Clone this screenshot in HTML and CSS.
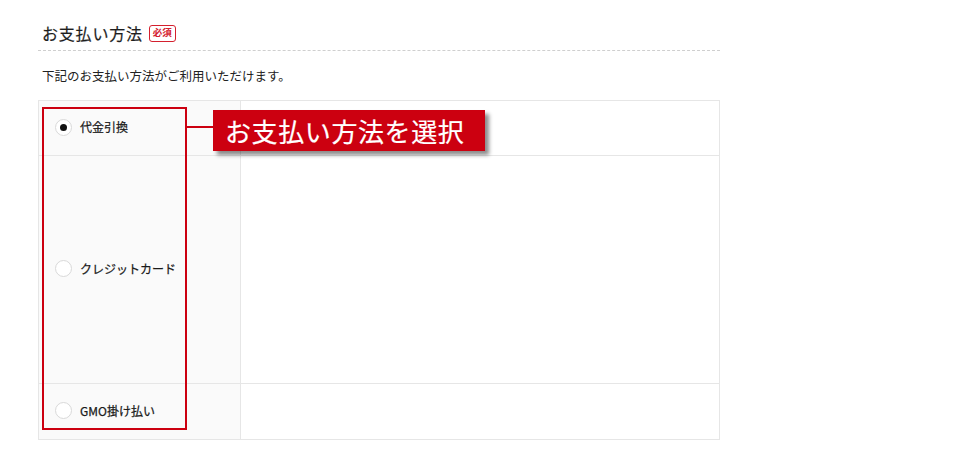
FILE: index.html
```html
<!DOCTYPE html>
<html lang="ja">
<head>
<meta charset="utf-8">
<link rel="stylesheet" href="styles.css">
</head>
<body>
<div class="section">
  <div class="head">
    <h2 class="title">お支払い方法</h2>
    <span class="badge">必須</span>
  </div>
  <p class="desc">下記のお支払い方法がご利用いただけます。</p>
  <div class="table-wrap">
    <table class="pay">
      <tr class="r1">
        <td class="label"><div class="opt"><span class="radio on"></span><span class="txt">代金引換</span></div></td>
        <td class="body"></td>
      </tr>
      <tr class="r2">
        <td class="label"><div class="opt"><span class="radio"></span><span class="txt">クレジットカード</span></div></td>
        <td class="body"></td>
      </tr>
      <tr class="r3">
        <td class="label"><div class="opt"><span class="radio"></span><span class="txt">GMO掛け払い</span></div></td>
        <td class="body"></td>
      </tr>
    </table>
    <div class="highlight"></div>
    <div class="connector"></div>
    <div class="callout">お支払い方法を選択</div>
  </div>
</div>
</body>
</html>
```
FILE: styles.css
```css
html, body {
  margin: 0;
  padding: 0;
  background: #ffffff;
}
body {
  font-family: "Noto Sans CJK JP", "Noto Sans", sans-serif;
  color: #222;
}
.section {
  width: 682px;
  margin-left: 38px;
}
.head {
  display: flex;
  align-items: center;
  gap: 6px;
  padding: 22px 0 6px 4px;
  height: 22px;
  border-bottom: 1px dashed #cfcfcf;
}
.title {
  margin: 0;
  font-size: 16px;
  font-weight: 400;
  line-height: 22px;
  letter-spacing: 0.8px;
  color: #1e1e1e;
  -webkit-text-stroke: 0.2px #1e1e1e;
}
.badge {
  display: inline-flex;
  align-items: center;
  justify-content: center;
  box-sizing: border-box;
  width: 27px;
  height: 17px;
  border: 1px solid #d4202e;
  border-radius: 3px;
  color: #d4202e;
  font-size: 9.5px;
  font-weight: 700;
  line-height: 1;
}
.desc {
  margin: 16px 0 15px 4px;
  font-size: 12.5px;
  line-height: 18px;
}
.table-wrap {
  position: relative;
}
.pay {
  width: 682px;
  border-collapse: collapse;
  border: 1px solid #e6e6e6;
}
.pay td {
  border: 1px solid #e6e6e6;
  padding: 0;
  vertical-align: middle;
}
.pay .label {
  width: 201px;
  background: #fafafa;
}
.pay .body {
  background: #fff;
}
.r1 { height: 55px; }
.r2 { height: 228px; }
.r3 { height: 56px; }
.opt {
  display: flex;
  align-items: center;
  font-size: 12px;
  font-weight: 400;
  line-height: 16px;
  margin-top: -2px;
  color: #1a1a1a;
  -webkit-text-stroke: 0.25px #1a1a1a;
}
.radio {
  box-sizing: border-box;
  flex: none;
  width: 17px;
  height: 17px;
  margin-left: 16px;
  margin-right: 8px;
  border: 1px solid #d9d9d9;
  border-radius: 50%;
  background: #fff;
  position: relative;
}
.radio.on::after {
  content: "";
  position: absolute;
  left: 4px;
  top: 4px;
  width: 7px;
  height: 7px;
  border-radius: 50%;
  background: #111;
}
.highlight {
  position: absolute;
  left: 4px;
  top: 7px;
  width: 145px;
  height: 323px;
  box-sizing: border-box;
  border: 2px solid #cc0010;
}
.connector {
  position: absolute;
  left: 148px;
  top: 26px;
  width: 27px;
  height: 2px;
  background: #cc0010;
}
.callout {
  position: absolute;
  left: 175px;
  top: 10px;
  width: 272px;
  height: 41px;
  box-sizing: border-box;
  background: #cc0010;
  color: #fff;
  font-size: 26px;
  font-weight: 400;
  line-height: 41px;
  padding-left: 12px;
  letter-spacing: 0.6px;
  -webkit-text-stroke: 0.2px #fff;
  box-shadow: 4px 4px 4px rgba(0, 0, 0, 0.45);
  white-space: nowrap;
}
```
